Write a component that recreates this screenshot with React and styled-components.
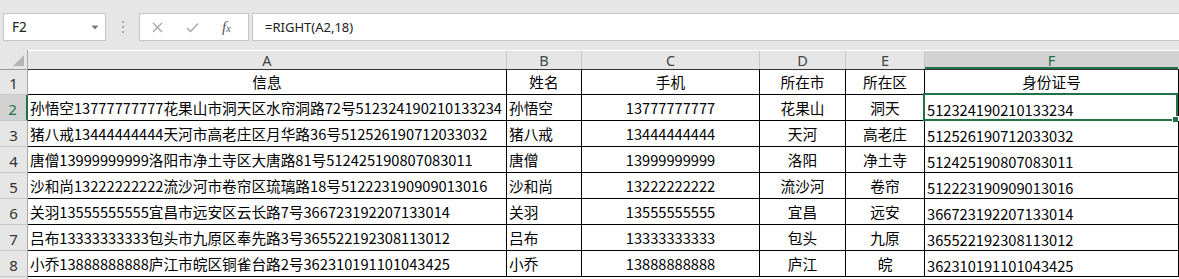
import React from 'react';
import styled, { createGlobalStyle } from 'styled-components';

const GlobalStyle = createGlobalStyle`
  html, body {
    margin: 0;
    padding: 0;
    background: #ffffff;
  }
  body {
    font-family: "Noto Sans", "Noto Sans CJK SC", sans-serif;
  }
`;

const Sheet = styled.div`
  width: 1179px;
  height: 279px;
  overflow: hidden;
  background: #ffffff;
`;

const Toolbar = styled.div`
  height: 50px;
  box-sizing: border-box;
  padding: 13px 0 0 3px;
  display: flex;
  align-items: flex-start;
  background: #e6e6e6;
`;

const Box = styled.div`
  height: 28px;
  box-sizing: border-box;
  background: #ffffff;
  border: 1px solid #c6c6c6;
  display: flex;
  align-items: center;
`;

const NameBox = styled(Box)`
  width: 103px;
  padding: 0 6px 0 8px;
  justify-content: space-between;
  font-size: 13.5px;
  color: #222;
`;

const Dots = styled.div`
  width: 33px;
  height: 28px;
  display: flex;
  flex-direction: column;
  align-items: center;
  justify-content: center;
  gap: 3px;

  span {
    width: 2px;
    height: 2px;
    background: #a8a8a8;
  }
`;

const FxBox = styled(Box)`
  width: 110px;
  padding-left: 12px;
  gap: 23px;
`;

const Fx = styled.span`
  font-family: "Liberation Serif", serif;
  font-style: italic;
  font-size: 15px;
  color: #555;

  sub {
    font-size: 10px;
    vertical-align: 0;
  }
`;

const FormulaInput = styled(Box)`
  flex: 1;
  margin-left: 3px;
  border-right: none;
  padding-left: 12px;
  font-size: 13px;
  color: #222;
`;

const Grid = styled.div`
  display: grid;
  grid-template-columns: 28px 479px 75px 178px 86px 79px 254px;
  grid-auto-rows: 26px;
  grid-template-rows: 19px;
`;

const Corner = styled.div`
  background: #e6e6e6;
  border-right: 1px solid #a9a9a9;
  position: relative;

  &::after {
    content: '';
    position: absolute;
    right: 3px;
    bottom: 3px;
    width: 0;
    height: 0;
    border-left: 11px solid transparent;
    border-bottom: 11px solid #b5b5b5;
  }
`;

const ColHead = styled.div`
  background: ${p => (p.$active ? '#d2d2d2' : '#e6e6e6')};
  color: ${p => (p.$active ? '#217346' : '#444')};
  border-right: 1px solid ${p => (p.$active ? '#d2d2d2' : '#c6c6c6')};
  box-shadow: ${p => (p.$active ? 'inset 0 -2px 0 #217346' : 'none')};
  font-size: 14.5px;
  display: flex;
  align-items: flex-end;
  justify-content: center;
  line-height: 18px;
  margin-top: 1px;
`;

const RowHead = styled.div`
  background: ${p => (p.$active ? '#d2d2d2' : '#e6e6e6')};
  color: ${p => (p.$active ? '#217346' : '#333')};
  border-right: ${p => (p.$active ? '2px solid #217346' : '1px solid #a9a9a9')};
  border-bottom: 1px solid #c8c8c8;
  border-top: ${p => (p.$first ? '1px solid #9a9a9a' : 'none')};
  font-size: 15px;
  display: flex;
  align-items: flex-end;
  justify-content: center;
  padding-bottom: 1px;
  line-height: 20px;
  padding-right: ${p => (p.$active ? '1px' : '0')};
`;

const Cell = styled.div`
  position: relative;
  border-right: 1px solid #000;
  border-bottom: 1px solid #000;
  border-top: ${p => (p.$first ? '1px solid #333' : 'none')};
  font-family: "Noto Sans CJK SC", "Noto Sans", sans-serif;
  font-size: 14.67px;
  color: #000;
  white-space: nowrap;
  overflow: hidden;
  display: flex;
  align-items: flex-end;
  justify-content: ${p => p.$align || 'flex-start'};
  padding-left: ${p => (p.$align === 'center' ? '0' : '2px')};
  padding-bottom: ${p => (p.$low ? '0px' : '2px')};
  line-height: 20px;
  box-sizing: border-box;
`;

const Selection = styled.div`
  position: absolute;
  top: -2px;
  left: -2px;
  right: 0;
  bottom: -1px;
  border: 2px solid #217346;
  pointer-events: none;

  &::after {
    content: '';
    position: absolute;
    right: -3px;
    bottom: -4px;
    width: 5px;
    height: 5px;
    background: #217346;
    border: 1px solid #fff;
  }
`;

const SelCell = styled(Cell)`
  overflow: visible;
`;

const Caret = () => (
  <svg width="8" height="5" viewBox="0 0 8 5">
    <path d="M0.5 0.5 L7.5 0.5 L4 4.5 Z" fill="#7a7a7a" />
  </svg>
);

const Cross = () => (
  <svg width="11" height="11" viewBox="0 0 11 11">
    <path d="M1 1 L10 10 M10 1 L1 10" stroke="#a6a6a6" strokeWidth="1.3" />
  </svg>
);

const Check = () => (
  <svg width="13" height="11" viewBox="0 0 13 11">
    <path d="M1 6 L4.5 9.5 L12 1.5" stroke="#a6a6a6" strokeWidth="1.4" fill="none" />
  </svg>
);

const columns = ['A', 'B', 'C', 'D', 'E', 'F'];
const aligns = ['flex-start', 'flex-start', 'center', 'center', 'center', 'flex-start'];

const header = ['信息', '姓名', '手机', '所在市', '所在区', '身份证号'];

const rows = [
  ['孙悟空13777777777花果山市洞天区水帘洞路72号512324190210133234', '孙悟空', '13777777777', '花果山', '洞天', '512324190210133234'],
  ['猪八戒13444444444天河市高老庄区月华路36号512526190712033032', '猪八戒', '13444444444', '天河', '高老庄', '512526190712033032'],
  ['唐僧13999999999洛阳市净土寺区大唐路81号512425190807083011', '唐僧', '13999999999', '洛阳', '净土寺', '512425190807083011'],
  ['沙和尚13222222222流沙河市卷帘区琉璃路18号512223190909013016', '沙和尚', '13222222222', '流沙河', '卷帘', '512223190909013016'],
  ['关羽13555555555宜昌市远安区云长路7号366723192207133014', '关羽', '13555555555', '宜昌', '远安', '366723192207133014'],
  ['吕布13333333333包头市九原区奉先路3号365522192308113012', '吕布', '13333333333', '包头', '九原', '365522192308113012'],
  ['小乔13888888888庐江市皖区铜雀台路2号362310191101043425', '小乔', '13888888888', '庐江', '皖', '362310191101043425'],
];

export default function App() {
  return (
    <Sheet>
      <GlobalStyle />
      <Toolbar>
        <NameBox>
          <span>F2</span>
          <Caret />
        </NameBox>
        <Dots>
          <span />
          <span />
          <span />
        </Dots>
        <FxBox>
          <Cross />
          <Check />
          <Fx>f<sub>x</sub></Fx>
        </FxBox>
        <FormulaInput>=RIGHT(A2,18)</FormulaInput>
      </Toolbar>
      <Grid>
        <Corner />
        {columns.map(c => (
          <ColHead key={c} $active={c === 'F'}>{c}</ColHead>
        ))}

        <RowHead $first>1</RowHead>
        {header.map(h => (
          <Cell key={h} $first $align="center">{h}</Cell>
        ))}

        {rows.map((r, ri) => (
          <React.Fragment key={ri}>
            <RowHead $active={ri === 0}>{ri + 2}</RowHead>
            {r.map((v, ci) => {
              const isF = ci === 5;
              if (isF && ri === 0) {
                return (
                  <SelCell key={ci} $align={aligns[ci]} $low>
                    {v}
                    <Selection />
                  </SelCell>
                );
              }
              return (
                <Cell key={ci} $align={aligns[ci]} $low={isF}>{v}</Cell>
              );
            })}
          </React.Fragment>
        ))}
        <RowHead />
      </Grid>
    </Sheet>
  );
}
